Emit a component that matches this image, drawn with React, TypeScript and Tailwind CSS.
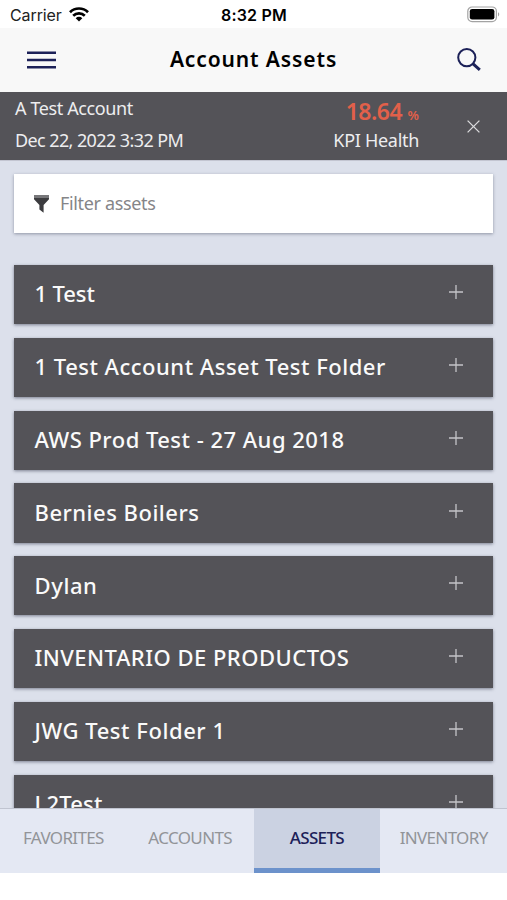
import { useState } from "react"
import clsx from "clsx"

const folders = [
  { name: "1 Test", tracking: "tracking-[-0.1px]" },
  { name: "1 Test Account Asset Test Folder", tracking: "tracking-[0.5px]" },
  { name: "AWS Prod Test - 27 Aug 2018", tracking: "tracking-[0.48px]" },
  { name: "Bernies Boilers", tracking: "tracking-[0.5px]" },
  { name: "Dylan", tracking: "tracking-[0.6px]" },
  { name: "INVENTARIO DE PRODUCTOS", tracking: "tracking-[0.48px]" },
  { name: "JWG Test Folder 1", tracking: "tracking-[0.55px]" },
  { name: "L2Test", tracking: "tracking-[0.2px]" },
]

const tabs = ["FAVORITES", "ACCOUNTS", "ASSETS", "INVENTORY"]

function StatusBar() {
  return (
    <div className="grid h-7 shrink-0 grid-cols-3 items-center bg-white pt-0.5 pr-[7px] pl-2.5 font-['Inter',sans-serif] text-[16px] leading-none text-black">
      <div className="flex items-center gap-[7px]">
        <span className="tracking-[-0.1px] text-[#222]">Carrier</span>
        <svg className="-mt-0.5" width="20" height="15" viewBox="0 0 20 15" fill="none" stroke="#000" strokeWidth="2.7">
          <path d="M1 5.2a12.8 12.8 0 0 1 18 0" />
          <path d="M4.2 8.7a8.3 8.3 0 0 1 11.6 0" />
          <path d="M10 14.6l3.3-3.4a4.7 4.7 0 0 0-6.6 0z" fill="#000" stroke="none" />
        </svg>
      </div>
      <span className="pr-0.5 text-center font-semibold tracking-[0.2px] whitespace-nowrap">8:32 PM</span>
      <svg className="-mt-0.5 justify-self-end" width="33" height="17" viewBox="0 0 33 17">
        <rect x="0.8" y="1" width="28.6" height="14.6" rx="4.3" fill="none" stroke="#a3a3a3" strokeWidth="1.2" />
        <rect x="2.8" y="3" width="24.6" height="10.6" rx="2.3" fill="#000" />
        <path d="M31 6.2v4.2c1.7-.6 1.7-3.6 0-4.2z" fill="#a3a3a3" />
      </svg>
    </div>
  )
}

function NavBar() {
  return (
    <header className="flex h-16 shrink-0 items-center justify-between bg-[#f8f8f8] pr-[26px] pl-[27px]">
      <button aria-label="Menu">
        <svg className="-mt-px" width="29" height="18" viewBox="0 0 29 18" stroke="#1c2158" strokeWidth="2.5">
          <path d="M0 1.7h29M0 9h29M0 16.2h29" />
        </svg>
      </button>
      <h1 className="pr-[6px] text-[21px] font-semibold tracking-[0.88px] whitespace-nowrap text-black">
        Account Assets
      </h1>
      <button aria-label="Search">
        <svg width="24" height="24" viewBox="0 0 24 24" fill="none" stroke="#1c2158">
          <circle cx="9.8" cy="9.6" r="8.6" strokeWidth="2" />
          <path d="M15.8 15.6l7 6.2" strokeWidth="3" />
        </svg>
      </button>
    </header>
  )
}

function AccountBanner() {
  return (
    <div className="flex h-[67.5px] shrink-0 justify-between bg-[#545358] pr-[27px] pl-[15px] text-[18px] leading-8 text-[#ededef]">
      <div className="whitespace-nowrap">
        <p className="tracking-[-0.38px]">A Test Account</p>
        <p className="tracking-[-0.6px]">Dec 22, 2022 3:32 PM</p>
      </div>
      <div className="flex">
        <div className="text-right whitespace-nowrap">
          <p className="h-8 pt-[5px] text-[23px] leading-[29px] font-semibold tracking-[-0.5px] text-[#e2604a]">
            18.64 <span className="text-[13px] leading-none tracking-normal">%</span>
          </p>
          <p className="tracking-[-0.3px]">KPI Health</p>
        </div>
        <button aria-label="Close" className="ml-[48px] pt-0.5">
          <svg width="13" height="13" viewBox="0 0 13 13" stroke="#dcdcde" strokeWidth="1.3">
            <path d="M.6.6l11.8 11.8M12.4.6L.6 12.4" />
          </svg>
        </button>
      </div>
    </div>
  )
}

function FilterBox() {
  return (
    <label className="flex h-[59px] shrink-0 items-center gap-[11px] bg-white pl-5 shadow-[0_1px_3px_rgba(70,75,95,0.5)]">
      <svg className="mt-0.5" width="15" height="18" viewBox="0 0 15 18">
        <path d="M0 0h15v3H0z" fill="#77777a" />
        <path d="M0 3h15v1.2L9.6 10v7.7L5.4 14.6V10L0 4.2z" fill="#3c3c3f" />
      </svg>
      <span className="text-[18px] tracking-[-0.35px] text-[#858588]">Filter assets</span>
    </label>
  )
}

function FolderRow({ name, tracking }: { name: string; tracking: string }) {
  return (
    <li className="flex h-[59.3px] shrink-0 items-center justify-between bg-[#545358] pr-[30.5px] pl-[20.5px] shadow-[0_1px_3px_rgba(60,65,85,0.6)]">
      <span className={clsx("pb-[1.5px] text-[22px] font-medium whitespace-nowrap text-[#fafafa]", tracking)}>
        {name}
      </span>
      <svg className="mb-[5px]" width="14" height="14" viewBox="0 0 14 14" stroke="#c4c4c8" strokeWidth="1.3">
        <path d="M7 0v14M0 7h14" />
      </svg>
    </li>
  )
}

export default function App() {
  const [active, setActive] = useState("ASSETS")

  return (
    <div className="flex h-[900px] w-[507px] flex-col overflow-hidden bg-white font-['Noto_Sans',sans-serif]">
      <StatusBar />
      <NavBar />
      <AccountBanner />
      <main className="flex min-h-0 flex-1 flex-col overflow-hidden border-t border-[#c3c5d1] bg-[#dce0eb] px-[14px] pt-[13px]">
        <FilterBox />
        <ul className="mt-[32.5px] flex flex-col gap-[13.5px]">
          {folders.map((f) => (
            <FolderRow key={f.name} {...f} />
          ))}
        </ul>
      </main>
      <nav className="grid h-[65px] shrink-0 grid-cols-4 border-t border-[#c0c4d0] bg-[#e4e8f3]">
        {tabs.map((t) => (
          <button
            key={t}
            onClick={() => setActive(t)}
            className={clsx(
              "border-b-[5px] pb-0.5 text-[17px] tracking-[-0.65px] whitespace-nowrap",
              active === t
                ? "border-[#6c92cb] bg-[#cbd2e2] font-medium text-[#1c2158]"
                : "border-transparent text-[#929498]"
            )}
          >
            {t}
          </button>
        ))}
      </nav>
      <div className="h-[27px] shrink-0 bg-white" />
    </div>
  )
}
